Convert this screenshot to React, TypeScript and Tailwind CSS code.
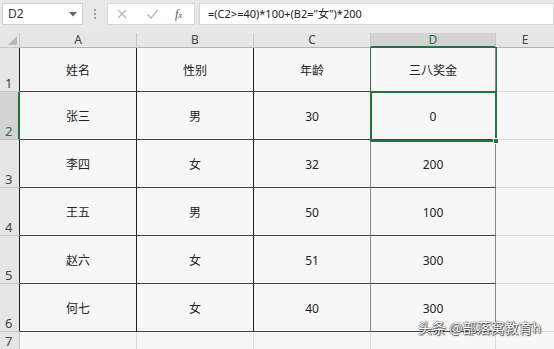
import React from "react";

const cols = [
  { key: "A", w: "w-[117px]", line: "border-r-[#222]" },
  { key: "B", w: "w-[117px]", line: "border-r-[#222]" },
  { key: "C", w: "w-[117px]", line: "border-r-[#888]" },
  { key: "D", w: "w-[125px]", line: "border-r-[#888]" },
];

const rows = [
  { n: 1, h: "h-[44px]", cells: ["姓名", "性别", "年龄", "三八奖金"] },
  { n: 2, h: "h-[48px]", cells: ["张三", "男", "30", "0"] },
  { n: 3, h: "h-[48px]", cells: ["李四", "女", "32", "200"] },
  { n: 4, h: "h-[48px]", cells: ["王五", "男", "50", "100"] },
  { n: 5, h: "h-[48px]", cells: ["赵六", "女", "51", "300"] },
  { n: 6, h: "h-[48px]", cells: ["何七", "女", "40", "300"] },
];

const font = "font-['Noto_Sans','Noto_Sans_CJK_SC',sans-serif]";

export default function App() {
  return (
    <div className={`w-[554px] h-[349px] overflow-hidden bg-[#f7f7f7] ${font} text-[#222]`}>
      {/* formula bar */}
      <div className="h-[33px] bg-[#e8e8e8] flex items-start pt-[3px] pl-[2px] gap-0">
        <div className="w-[81px] h-[22px] bg-white border border-[#d0d0d0] flex items-center justify-between pl-[5px] pr-[5px] text-[12px] text-[#333]">
          <span>D2</span>
          <svg width="8" height="5" viewBox="0 0 8 5">
            <path d="M0 0 L8 0 L4 4.5 Z" fill="#666" />
          </svg>
        </div>
        <div className="w-[24px] h-[22px] flex flex-col items-center justify-center gap-[2px]">
          <span className="w-[2px] h-[2px] bg-[#9a9a9a]" />
          <span className="w-[2px] h-[2px] bg-[#9a9a9a]" />
          <span className="w-[2px] h-[2px] bg-[#9a9a9a]" />
        </div>
        <div className="w-[88px] h-[22px] bg-white border border-[#d8d8d8] flex items-center pl-[8px]">
          <svg width="12" height="12" viewBox="0 0 12 12" className="mr-[18px]">
            <path d="M2 2 L10 10 M10 2 L2 10" stroke="#b5b5b5" strokeWidth="1.2" />
          </svg>
          <svg width="13" height="12" viewBox="0 0 13 12" className="mr-[16px]">
            <path d="M1.5 6.5 L5 10 L11.5 2" stroke="#b5b5b5" strokeWidth="1.2" fill="none" />
          </svg>
          <span className="text-[12px] italic text-[#555] font-['Liberation_Serif',serif]">f<span className="text-[9px]">x</span></span>
        </div>
        <div className="flex-1 ml-[4px] h-[22px] bg-white border border-[#d8d8d8] flex items-center pl-[8px] text-[11px] text-[#222]">
          =(C2&gt;=40)*100+(B2="女")*200
        </div>
      </div>

      {/* sheet */}
      <div className="relative">
        {/* column header */}
        <div className="flex h-[15px] bg-[#e6e6e6] text-[12px] text-[#444]">
          <div className="w-[20px] border-r border-b border-[#c6c6c6] flex items-end justify-end p-[2px]">
            <svg width="9" height="9" viewBox="0 0 9 9">
              <path d="M9 0 L9 9 L0 9 Z" fill="#b8b8b8" />
            </svg>
          </div>
          {cols.map((c) => (
            <div
              key={c.key}
              className={`${c.w} flex items-center justify-center leading-none border-r border-[#c6c6c6] ${
                c.key === "D"
                  ? "bg-[#d3d3d3] text-[#217346] border-b-2 border-b-[#217346]"
                  : "border-b border-b-[#b5b5b5]"
              }`}
            >
              {c.key}
            </div>
          ))}
          <div className="flex-1 flex items-center justify-center leading-none border-b border-[#b5b5b5]">E</div>
        </div>

        {rows.map((r) => (
          <div key={r.n} className={`flex ${r.h}`}>
            <div
              className={`w-[20px] flex items-end pl-[5px] pb-[1px] text-[13px] leading-none ${
                r.n === 2
                  ? "bg-[#d3d3d3] text-[#217346] border-r-2 border-r-[#217346] border-b border-b-[#bdbdbd]"
                  : "bg-[#e6e6e6] text-[#444] border-r border-r-[#222] border-b border-b-[#c8c8c8]"
              }`}
            >
              {r.n}
            </div>
            {cols.map((c, i) => (
              <div
                key={c.key}
                className={`${c.w} border-r border-b border-b-[#444] ${c.line} flex items-center justify-center pt-[3px] text-[12px]`}
              >
                {r.cells[i]}
              </div>
            ))}
            <div className="flex-1 border-b border-[#dadada]" />
          </div>
        ))}

        {/* row 7 */}
        <div className="flex h-[20px]">
          <div className="w-[20px] bg-[#e6e6e6] text-[#444] border-r border-[#c8c8c8] flex items-start pl-[5px] pt-[3px] text-[13px] leading-none">
            7
          </div>
          {cols.map((c) => (
            <div key={c.key} className={`${c.w} border-r border-[#dadada]`} />
          ))}
          <div className="flex-1" />
        </div>

        {/* selection */}
        <div className="absolute left-[370px] top-[14px] w-[127px] h-[45px] border border-[#2a6a46] pointer-events-none" />
        <div className="absolute left-[370px] top-[58px] w-[127px] h-[51px] border-2 border-[#217346] pointer-events-none" />
        <div className="absolute left-[493px] top-[105px] w-[6px] h-[6px] bg-[#217346] border border-white" />

        {/* watermark */}
        <div className="absolute left-[418px] top-[287px] text-[14px] leading-none text-white font-['Noto_Sans_CJK_SC',sans-serif] [text-shadow:0_0_1px_#333,0_0_1px_#333,1px_1px_1px_#555]">
          头条 @部落窝教育h
        </div>
      </div>
    </div>
  );
}
